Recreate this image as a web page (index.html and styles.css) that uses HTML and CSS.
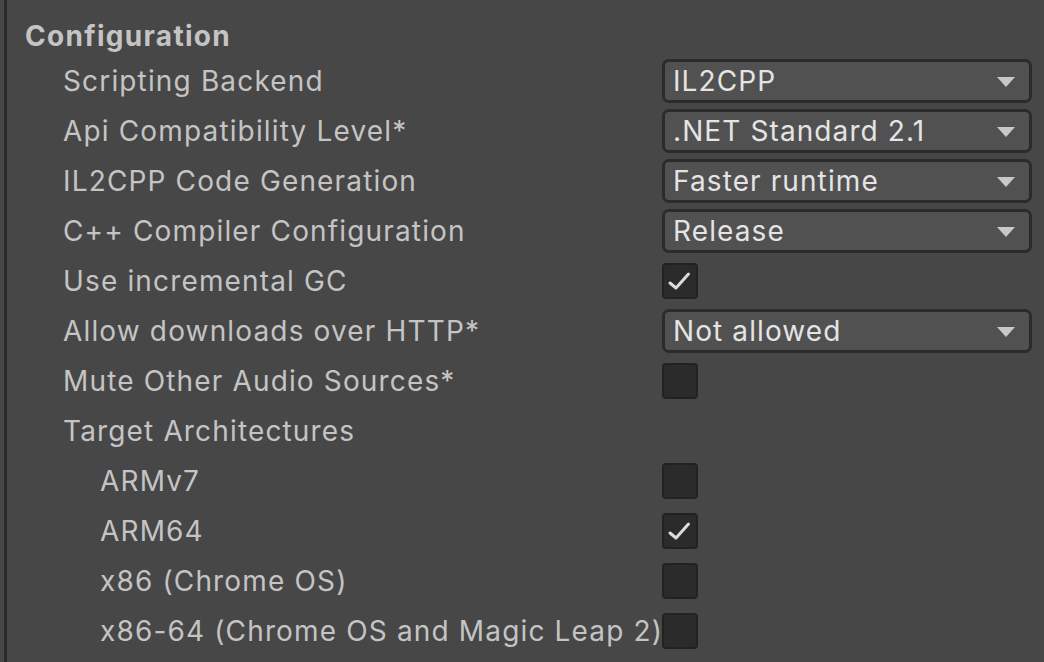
FILE: index.html
```html
<!DOCTYPE html>
<html>
<head>
<meta charset="utf-8">
<link rel="stylesheet" href="styles.css">
</head>
<body>
<div class="panel">
  <div class="header">Configuration</div>
  <div class="row"><div class="label">Scripting Backend</div><div class="dropdown"><span>IL2CPP</span><i class="arrow"></i></div></div>
  <div class="row"><div class="label">Api Compatibility Level*</div><div class="dropdown"><span>.NET Standard 2.1</span><i class="arrow"></i></div></div>
  <div class="row"><div class="label">IL2CPP Code Generation</div><div class="dropdown"><span>Faster runtime</span><i class="arrow"></i></div></div>
  <div class="row"><div class="label">C++ Compiler Configuration</div><div class="dropdown"><span>Release</span><i class="arrow"></i></div></div>
  <div class="row"><div class="label">Use incremental GC</div><div class="check"><svg viewBox="0 0 36 36"><path d="M8 20 L14 25 L26.5 11"/></svg></div></div>
  <div class="row"><div class="label">Allow downloads over HTTP*</div><div class="dropdown"><span>Not allowed</span><i class="arrow"></i></div></div>
  <div class="row"><div class="label">Mute Other Audio Sources*</div><div class="check"></div></div>
  <div class="row"><div class="label">Target Architectures</div></div>
  <div class="row sub"><div class="label">ARMv7</div><div class="check"></div></div>
  <div class="row sub"><div class="label">ARM64</div><div class="check"><svg viewBox="0 0 36 36"><path d="M8 20 L14 25 L26.5 11"/></svg></div></div>
  <div class="row sub"><div class="label">x86 (Chrome OS)</div><div class="check"></div></div>
  <div class="row sub"><div class="label">x86-64 (Chrome OS and Magic Leap 2)</div><div class="check"></div></div>
</div>
</body>
</html>
```
FILE: styles.css
```css
html, body {
  margin: 0;
  padding: 0;
  background: #474747;
  width: 1044px;
  height: 662px;
  overflow: hidden;
}
body {
  padding-left: 4px;
  box-sizing: border-box;
}
.panel {
  border-left: 3px solid #2a2a2a;
  height: 662px;
  box-sizing: border-box;
  padding-left: 18px;
  font-family: Inter, "Noto Sans", sans-serif;
  font-size: 28px;
  color: #c4c4c4;
}
.header {
  height: 56px;
  line-height: 48px;
  padding-top: 12px;
  box-sizing: border-box;
  font-weight: 700;
  letter-spacing: 1.3px;
}
.row {
  height: 50px;
  display: grid;
  grid-template-columns: 599px 370px;
  align-items: center;
  padding-left: 38px;
}
.row.sub {
  padding-left: 75px;
  grid-template-columns: 562px 370px;
}
.label {
  white-space: nowrap;
  letter-spacing: 1.15px;
}
.dropdown {
  height: 44px;
  box-sizing: border-box;
  background: #515151;
  border: 3px solid #2b2b2b;
  border-radius: 7px;
  display: flex;
  align-items: center;
  justify-content: space-between;
  padding: 0 14px 0 8px;
  color: #e4e4e4;
  margin-top: -1px;
}
.dropdown span {
  letter-spacing: 1.1px;
}
.arrow {
  width: 0;
  height: 0;
  border-left: 9px solid transparent;
  border-right: 9px solid transparent;
  border-top: 10px solid #c8c8c8;
  margin-top: 2px;
}
.check {
  width: 36px;
  height: 36px;
  box-sizing: border-box;
  background: #2b2b2b;
  border: 2px solid #222222;
  border-radius: 4px;
  position: relative;
}
.check svg {
  position: absolute;
  left: -2px;
  top: -2px;
  width: 36px;
  height: 36px;
}
.check path {
  fill: none;
  stroke: #dcdcdc;
  stroke-width: 3;
  stroke-linecap: round;
  stroke-linejoin: round;
}
```
